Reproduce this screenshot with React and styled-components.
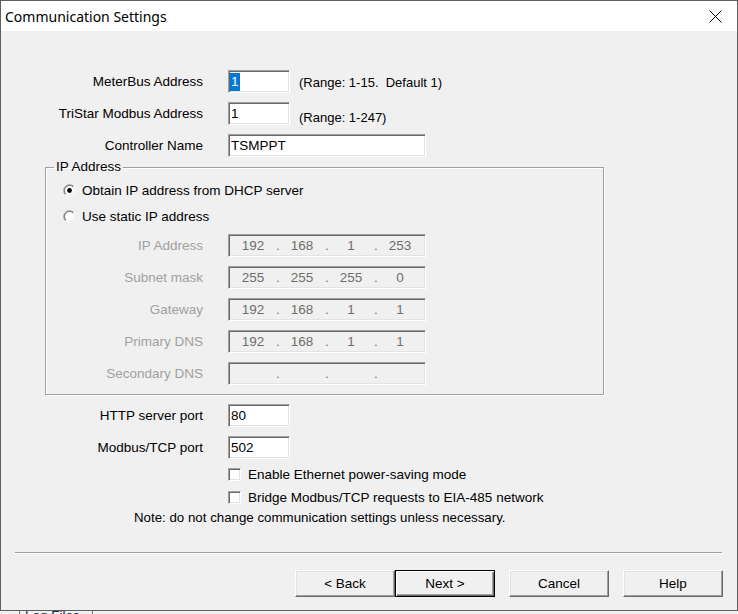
import React from 'react';
import styled, { createGlobalStyle } from 'styled-components';

const GlobalStyle = createGlobalStyle`
  html, body {
    margin: 0;
    padding: 0;
    background: #f0f0f0;
  }
  body {
    font-family: "Liberation Sans", Arial, sans-serif;
    font-size: 13.5px;
    color: #000;
  }
`;

const Screen = styled.div`
  width: 738px;
  height: 614px;
  display: flex;
  flex-direction: column;
  overflow: hidden;
`;

const Window = styled.div`
  box-sizing: border-box;
  width: 738px;
  height: 611px;
  border: 1px solid #5f5f5f;
  background: #f0f0f0;
  display: flex;
  flex-direction: column;
`;

const TitleBar = styled.div`
  height: 30px;
  background: #fff;
  display: flex;
  align-items: center;
  justify-content: space-between;
  padding: 0 15px 0 4px;
`;

const Title = styled.span`
  font-family: "Noto Sans", "Open Sans", sans-serif;
  font-size: 14px;
  color: #000;
`;

const Content = styled.div`
  flex: 1;
  padding-top: 39px;
  display: flex;
  flex-direction: column;
`;

const Stack = styled.div`
  display: flex;
  flex-direction: column;
  gap: ${p => p.$gap ?? 9}px;
  margin-top: ${p => p.$mt ?? 0}px;
`;

const Row = styled.div`
  display: flex;
  align-items: center;
  height: 23px;
`;

const Label = styled.span`
  width: ${p => p.$w}px;
  margin-right: 25px;
  text-align: right;
  white-space: nowrap;
  color: ${p => (p.$disabled ? '#a0a0a0' : '#000')};
`;

const Hint = styled.span`
  margin-left: 9px;
  margin-top: ${p => (p.$drop ? 8 : 2)}px;
  font-size: 13px;
  white-space: pre;
`;

const EditBox = styled.div`
  box-sizing: border-box;
  width: ${p => p.$w}px;
  height: 23px;
  background: ${p => (p.$disabled ? '#f0f0f0' : '#fff')};
  border: 1px solid;
  border-color: #a0a0a0 #fff #fff #a0a0a0;
  box-shadow: inset 1px 1px 0 #696969, inset -1px -1px 0 #e3e3e3;
  padding: 0 ${p => (p.$ip ? 1 : 2)}px;
  display: flex;
  align-items: center;
  white-space: nowrap;
`;

const Selected = styled.span`
  background: #0078d7;
  color: #fff;
  line-height: 18px;
  padding: 0 1px;
  margin-left: -1px;
`;

const Octet = styled.span`
  width: 46px;
  text-align: center;
  color: #6d6d6d;
`;

const Dot = styled.span`
  width: 3px;
  text-align: left;
  color: #6d6d6d;
`;

const Group = styled.fieldset`
  box-sizing: border-box;
  width: 559px;
  margin: 2px 0 0 44px;
  padding: 6px 0 9px 0;
  border: 1px solid #a0a0a0;
  box-shadow: inset 1px 1px 0 #fff, 1px 1px 0 #fff;
  min-width: 0;
`;

const Legend = styled.legend`
  margin-left: 8px;
  padding: 0 2px;
  line-height: 16px;
`;

const RadioRow = styled.label`
  display: flex;
  align-items: center;
  gap: 6px;
  height: 18px;
  padding-left: 17px;
`;

const CheckRow = styled.label`
  display: flex;
  align-items: center;
  gap: 7px;
  height: 17px;
  padding-left: 227px;
`;

const CheckBox = styled.span`
  box-sizing: border-box;
  width: 13px;
  height: 13px;
  background: #fff;
  border: 1px solid;
  border-color: #a0a0a0 #fff #fff #a0a0a0;
  box-shadow: inset 1px 1px 0 #696969, inset -1px -1px 0 #e3e3e3;
`;

const Note = styled.div`
  margin-top: 4px;
  padding-left: 133px;
  line-height: 16px;
  font-size: 13.3px;
`;

const Footer = styled.div`
  display: flex;
  flex-direction: column;
  padding-bottom: 13px;
`;

const Separator = styled.div`
  height: 1px;
  margin: 0 15px 0 14px;
  background: #a0a0a0;
  border-bottom: 1px solid #fff;
`;

const ButtonRow = styled.div`
  display: flex;
  justify-content: flex-end;
  margin-top: 16px;
  padding-right: 14px;
`;

const Button = styled.button`
  box-sizing: border-box;
  width: 100px;
  height: 27px;
  margin-left: ${p => p.$ml ?? 14}px;
  padding: 0;
  font-family: inherit;
  font-size: 13.5px;
  color: #000;
  background: #f0f0f0;
  border: 1px solid;
  border-color: ${p => (p.$default ? '#000' : '#fff #696969 #696969 #fff')};
  box-shadow: ${p =>
    p.$default
      ? 'inset 1px 1px 0 #fff, inset -1px -1px 0 #696969, inset -2px -2px 0 #a0a0a0'
      : 'inset -1px -1px 0 #a0a0a0, inset 1px 1px 0 #e3e3e3'};
`;

const Strip = styled.div`
  height: 3px;
  overflow: hidden;
  display: flex;
  background: #f0f0f0;
`;

const StripTab = styled.div`
  margin-left: 19px;
  width: 67px;
  border-left: 1px solid #7a7a7a;
  border-right: 1px solid #7a7a7a;
  padding-left: 5px;
  line-height: 16px;
  color: #1a2a5a;
  margin-top: -3px;
`;

function CloseIcon() {
  return (
    <svg width="13" height="13" viewBox="0 0 13 13">
      <path d="M0.5 0.5 L12.5 12.5 M12.5 0.5 L0.5 12.5" stroke="#000" strokeWidth="1" fill="none" />
    </svg>
  );
}

function Radio({ checked }) {
  return (
    <svg width="13" height="13" viewBox="0 0 13 13">
      <circle cx="6.5" cy="6.5" r="5" fill="#fff" />
      <path d="M2.26 10.74 A6 6 0 0 1 10.74 2.26" stroke="#a0a0a0" fill="none" />
      <path d="M10.74 2.26 A6 6 0 0 1 2.26 10.74" stroke="#fff" fill="none" />
      <path d="M2.96 10.04 A5 5 0 0 1 10.04 2.96" stroke="#696969" fill="none" />
      <path d="M10.04 2.96 A5 5 0 0 1 2.96 10.04" stroke="#e3e3e3" fill="none" />
      {checked && <circle cx="6.5" cy="6.5" r="2.4" fill="#000" />}
    </svg>
  );
}

function IPField({ parts }) {
  return (
    <EditBox $w={198} $disabled $ip>
      {parts.map((p, i) => (
        <React.Fragment key={i}>
          {i > 0 && <Dot>.</Dot>}
          <Octet>{p}</Octet>
        </React.Fragment>
      ))}
    </EditBox>
  );
}

const ipRows = [
  ['IP Address', ['192', '168', '1', '253']],
  ['Subnet mask', ['255', '255', '255', '0']],
  ['Gateway', ['192', '168', '1', '1']],
  ['Primary DNS', ['192', '168', '1', '1']],
  ['Secondary DNS', ['', '', '', '']],
];

export default function App() {
  return (
    <Screen>
      <GlobalStyle />
      <Window>
        <TitleBar>
          <Title>Communication Settings</Title>
          <CloseIcon />
        </TitleBar>

        <Content>
          <Stack>
            <Row>
              <Label $w={202}>MeterBus Address</Label>
              <EditBox $w={62}>
                <Selected>1</Selected>
              </EditBox>
              <Hint>{'(Range: 1-15.  Default 1)'}</Hint>
            </Row>
            <Row>
              <Label $w={202}>TriStar Modbus Address</Label>
              <EditBox $w={62}>1</EditBox>
              <Hint $drop>(Range: 1-247)</Hint>
            </Row>
            <Row>
              <Label $w={202}>Controller Name</Label>
              <EditBox $w={198}>TSMPPT</EditBox>
            </Row>
          </Stack>

          <Group>
            <Legend>IP Address</Legend>
            <Stack $gap={8}>
              <RadioRow>
                <Radio checked />
                Obtain IP address from DHCP server
              </RadioRow>
              <RadioRow>
                <Radio />
                Use static IP address
              </RadioRow>
            </Stack>
            <Stack $mt={9}>
              {ipRows.map(([label, parts]) => (
                <Row key={label}>
                  <Label $w={157} $disabled>{label}</Label>
                  <IPField parts={parts} />
                </Row>
              ))}
            </Stack>
          </Group>

          <Stack $mt={9}>
            <Row>
              <Label $w={202}>HTTP server port</Label>
              <EditBox $w={62}>80</EditBox>
            </Row>
            <Row>
              <Label $w={202}>Modbus/TCP port</Label>
              <EditBox $w={62}>502</EditBox>
            </Row>
          </Stack>

          <Stack $gap={6} $mt={7}>
            <CheckRow>
              <CheckBox />
              Enable Ethernet power-saving mode
            </CheckRow>
            <CheckRow>
              <CheckBox />
              Bridge Modbus/TCP requests to EIA-485 network
            </CheckRow>
          </Stack>

          <Note>Note: do not change communication settings unless necessary.</Note>
        </Content>

        <Footer>
          <Separator />
          <ButtonRow>
            <Button $ml={0}>&lt; Back</Button>
            <Button $ml={0} $default>Next &gt;</Button>
            <Button>Cancel</Button>
            <Button>Help</Button>
          </ButtonRow>
        </Footer>
      </Window>
      <Strip>
        <StripTab>Log Files</StripTab>
      </Strip>
    </Screen>
  );
}
